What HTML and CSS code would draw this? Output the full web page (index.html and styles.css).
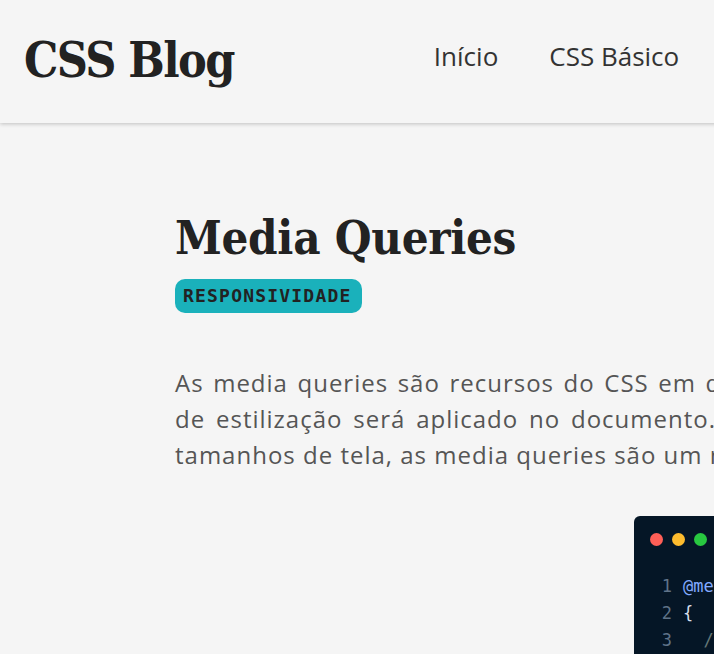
FILE: index.html
```html
<!DOCTYPE html>
<html lang="pt-BR">
<head>
<meta charset="utf-8">
<title>CSS Blog - Media Queries</title>
<link rel="stylesheet" href="styles.css">
</head>
<body>
<div class="page">
  <header class="site-header">
    <div class="logo">CSS Blog</div>
    <nav class="nav">
      <a href="#">Início</a>
      <a href="#">CSS Básico</a>
      <a href="#">Layouts</a>
      <a href="#">Sobre</a>
    </nav>
  </header>
  <main class="main">
    <article class="post">
      <h1 class="post-title">Media Queries</h1>
      <span class="tag">RESPONSIVIDADE</span>
      <p class="post-text">As media queries são recursos do CSS em que podemos definir quando um bloco de estilização será aplicado no documento. Para adaptar as páginas a diferentes tamanhos de tela, as media queries são um recurso essencial.</p>
      <div class="code-wrap">
        <div class="code">
          <div class="dots"><span class="dot red"></span><span class="dot yellow"></span><span class="dot green"></span></div>
          <pre class="code-body"><span class="ln">1</span><span class="kw">@media</span> <span class="pl">screen and (max-width: 768px)</span>
<span class="ln">2</span><span class="pl">{</span>
<span class="ln">3</span>  <span class="cm">/* estilos */</span>
<span class="ln">4</span><span class="pl">}</span></pre>
        </div>
      </div>
    </article>
  </main>
</div>
</body>
</html>
```
FILE: styles.css
```css
* { box-sizing: border-box; }
html, body { margin: 0; padding: 0; }
body {
  background: #f5f5f5;
  overflow: hidden;
  height: 654px;
}
.page { width: 1364px; }
.site-header {
  display: flex;
  align-items: center;
  height: 123px;
  padding: 0 24px 4px;
  background: #f5f5f5;
  box-shadow: 0 1px 4px rgba(0,0,0,0.22);
  position: relative;
  z-index: 1;
}
.logo {
  font-family: "DejaVu Serif", serif;
  font-stretch: condensed;
  font-weight: bold;
  font-size: 48px;
  letter-spacing: -1.6px;
  color: #222;
  margin-right: 200px;
}
.nav { display: flex; gap: 51px; margin-bottom: 8px; }
.nav a {
  font-family: "Open Sans", sans-serif;
  font-size: 26px;
  color: #333;
  text-decoration: none;
}
.main { padding: 86px 175px 0; }
.post { width: 1014px; }
.post-title {
  font-family: "DejaVu Serif", serif;
  font-stretch: condensed;
  font-weight: bold;
  font-size: 47px;
  letter-spacing: -0.3px;
  color: #222;
  margin: 0;
  line-height: 58px;
}
.tag {
  display: inline-block;
  background: #1ab1bb;
  color: #222;
  font-family: "DejaVu Sans Mono", monospace;
  font-weight: bold;
  font-size: 18px;
  letter-spacing: 1.2px;
  padding: 6px 10px 6px 8px;
  border-radius: 10px;
  line-height: 22px;
  margin-top: 12px;
}
.post-text {
  font-family: "Open Sans", sans-serif;
  font-size: 24px;
  letter-spacing: 1px;
  line-height: 36px;
  color: #555;
  text-align: justify;
  margin: 52px 0 0;
}
.code-wrap { display: flex; margin-top: 43px; padding-left: 459px; }
.code {
  width: 420px;
  background: #051626;
  border-radius: 6px;
  padding: 17px 16px;
}
.dots { display: flex; gap: 9px; }
.dot { width: 13px; height: 13px; border-radius: 50%; }
.red { background: #ff5f57; }
.yellow { background: #febc2e; }
.green { background: #28c840; }
.code-body {
  margin: 27px 0 0;
  font-family: "DejaVu Sans Mono", monospace;
  font-size: 17px;
  line-height: 27px;
  color: #d6deeb;
}
.ln { color: #5f7388; display: inline-block; width: 22px; text-align: right; margin-right: 11px; }
.kw { color: #82aaff; }
.pl { color: #d6deeb; }
.cm { color: #637777; }
```
